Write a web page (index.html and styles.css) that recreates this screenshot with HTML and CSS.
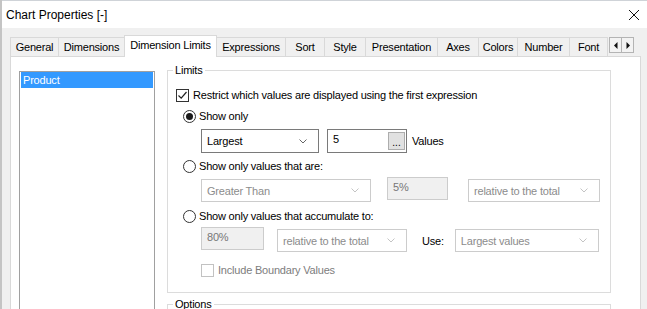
FILE: index.html
```html
<!DOCTYPE html>
<html lang="en">
<head>
    <meta charset="UTF-8">
    <title>Chart Properties [-]</title>
    <link rel="stylesheet" href="styles.css">
</head>
<body>
    <div class="window">
        <div class="titlebar">
            <span class="title">Chart Properties [-]</span>
            <svg class="close" width="12" height="12" viewBox="0 0 12 12"><path d="M1 1L11 11M11 1L1 11" stroke="#111" stroke-width="1" fill="none"/></svg>
        </div>

        <div class="dialog">
            <!-- tab strip -->
            <div class="tabs">
                <div class="tab tab-general">General</div>
                <div class="tab tab-dims">Dimensions</div>
                <div class="tab tab-limits active">Dimension Limits</div>
                <div class="tab tab-expr">Expressions</div>
                <div class="tab tab-sort">Sort</div>
                <div class="tab tab-style">Style</div>
                <div class="tab tab-pres">Presentation</div>
                <div class="tab tab-axes">Axes</div>
                <div class="tab tab-colors">Colors</div>
                <div class="tab tab-number">Number</div>
                <div class="tab tab-font">Font</div>
                <div class="tab-scroll">
                    <span class="scroll-btn"><svg width="4" height="7" viewBox="0 0 4 7"><polygon points="3.5,0 3.5,7 0,3.5" fill="#111"/></svg></span>
                    <span class="scroll-btn"><svg width="4" height="7" viewBox="0 0 4 7"><polygon points="0.5,0 0.5,7 4,3.5" fill="#111"/></svg></span>
                </div>
            </div>

            <div class="panel">
                <div class="listbox">
                    <div class="list-item selected">Product</div>
                </div>

                <div class="settings">
                    <fieldset class="group">
                        <legend>Limits</legend>

                        <div class="check-row">
                            <span class="checkbox"><svg width="11" height="11" viewBox="0 0 11 11"><path d="M1.5 5.5L4.2 8.2L9.5 2" fill="none" stroke="#222" stroke-width="1.2"/></svg></span>
                            Restrict which values are displayed using the first expression
                        </div>

                        <div class="radio-row first">
                            <span class="radio on"></span>Show only
                        </div>
                        <div class="field-row row-one">
                            <div class="combo w-largest">Largest
                                <svg width="8" height="5" viewBox="0 0 8 5"><path d="M0.5 0.5L4 4L7.5 0.5" fill="none" stroke="#666" stroke-width="1"/></svg>
                            </div>
                            <div class="textbox w-count">5<span class="dots">...</span></div>
                            <span class="field-label">Values</span>
                        </div>

                        <div class="radio-row">
                            <span class="radio"></span>Show only values that are:
                        </div>
                        <div class="field-row row-two">
                            <div class="combo disabled w-compare">Greater Than
                                <svg width="8" height="5" viewBox="0 0 8 5"><path d="M0.5 0.5L4 4L7.5 0.5" fill="none" stroke="#c4c4c4" stroke-width="1"/></svg>
                            </div>
                            <div class="textbox disabled w-percent">5%</div>
                            <div class="combo disabled w-relative">relative to the total
                                <svg width="8" height="5" viewBox="0 0 8 5"><path d="M0.5 0.5L4 4L7.5 0.5" fill="none" stroke="#c4c4c4" stroke-width="1"/></svg>
                            </div>
                        </div>

                        <div class="radio-row">
                            <span class="radio"></span>Show only values that accumulate to:
                        </div>
                        <div class="field-row row-three">
                            <div class="textbox disabled w-accum">80%</div>
                            <div class="combo disabled w-relative2">relative to the total
                                <svg width="8" height="5" viewBox="0 0 8 5"><path d="M0.5 0.5L4 4L7.5 0.5" fill="none" stroke="#c4c4c4" stroke-width="1"/></svg>
                            </div>
                            <span class="field-label use">Use:</span>
                            <div class="combo disabled w-use">Largest values
                                <svg width="8" height="5" viewBox="0 0 8 5"><path d="M0.5 0.5L4 4L7.5 0.5" fill="none" stroke="#c4c4c4" stroke-width="1"/></svg>
                            </div>
                        </div>

                        <div class="check-row boundary">
                            <span class="checkbox disabled"></span>Include Boundary Values
                        </div>
                    </fieldset>

                    <fieldset class="group options">
                        <legend>Options</legend>
                    </fieldset>
                </div>
            </div>
        </div>
    </div>
</body>
</html>
```

FILE: styles.css
```css
body {
    margin: 0;
    font-family: "Liberation Sans", Arial, sans-serif;
    font-size: 11px;
    letter-spacing: -0.2px;
    color: #000;
    background-color: #f0f0f0;
}

.window {
    width: 647px;
    height: 309px;
    overflow: hidden;
    box-sizing: border-box;
    border-left: 2px solid #c4c4c4;
    display: flex;
    flex-direction: column;
}

.titlebar {
    flex-shrink: 0;
    height: 28px;
    box-sizing: border-box;
    border-top: 1px solid #cfd3d8;
    background-color: #fff;
    display: flex;
    align-items: center;
    justify-content: space-between;
    padding: 0 7px 0 4px;
}

    .titlebar .title {
        font-size: 12px;
        letter-spacing: 0;
    }

.dialog {
    flex-shrink: 0;
    display: flex;
    flex-direction: column;
    padding: 7px 6px 0 8px;
}

/* tab strip */
.tabs {
    display: flex;
    align-items: flex-end;
    height: 21px;
}

.tab {
    flex-shrink: 0;
    box-sizing: border-box;
    height: 19px;
    line-height: 18px;
    text-align: center;
    border: 1px solid #d9d9d9;
    border-bottom: none;
    margin-left: -1px;
    background-color: #f0f0f0;
}

    .tab:first-child {
        margin-left: 0;
    }

    .tab.active {
        position: relative;
        z-index: 1;
        height: 22px;
        line-height: 19px;
        margin-bottom: -1px;
        background-color: #fff;
    }

.tab-general { width: 49px; }
.tab-dims { width: 67px; }
.tab-limits { width: 93px; }
.tab-expr { width: 70px; }
.tab-sort { width: 40px; }
.tab-style { width: 42px; }
.tab-pres { width: 73px; }
.tab-axes { width: 42px; }
.tab-colors { width: 40px; }
.tab-number { width: 53px; }
.tab-font { width: 39px; }

.tab-scroll {
    display: flex;
    align-self: flex-start;
    margin: 2px 7px 0 auto;
}

.scroll-btn {
    width: 11px;
    height: 14px;
    border: 1px solid #b4b4b4;
    background-color: #f3f3f3;
    display: flex;
    align-items: center;
    justify-content: center;
}

    .scroll-btn + .scroll-btn {
        margin-left: -1px;
    }

/* page body */
.panel {
    display: flex;
    height: 260px;
    background-color: #fff;
    border: 1px solid #d9d9d9;
    padding: 6px 0 0 8px;
}

.listbox {
    flex-shrink: 0;
    width: 136px;
    height: 260px;
    margin-top: 8px;
    box-sizing: border-box;
    border: 1px solid #a0a0a0;
    padding: 0 1px;
}

.list-item {
    height: 16px;
    line-height: 16px;
    padding-left: 2px;
}

    .list-item.selected {
        background-color: #3399ff;
        color: #fff;
    }

.settings {
    width: 444px;
    margin-left: 12px;
}

.group {
    margin: 0;
    min-width: 0;
    padding: 0 8px 15px;
    border: 1px solid #dcdcdc;
}

    .group legend {
        padding: 0 2px;
        margin-left: -3px;
        line-height: 14px;
    }

.options {
    margin-top: 4px;
    height: 40px;
}

.check-row,
.radio-row {
    display: flex;
    align-items: center;
    height: 14px;
}

.check-row {
    margin-top: 11px;
}

    .check-row.boundary {
        margin-left: 25px;
        color: #7d7d7d;
    }

.checkbox {
    width: 13px;
    height: 13px;
    box-sizing: border-box;
    border: 1px solid #333;
    margin-right: 4px;
    display: flex;
    align-items: center;
    justify-content: center;
    background-color: #fff;
}

    .checkbox.disabled {
        border-color: #c2c2c2;
    }

.radio-row {
    margin: 6px 0 0 7px;
}

    .radio-row.first {
        margin-top: 7px;
    }

    .radio-row + .field-row {
        margin-top: 4px;
    }

.radio {
    width: 13px;
    height: 13px;
    box-sizing: border-box;
    border: 1px solid #333;
    border-radius: 50%;
    margin-right: 3px;
    display: flex;
    align-items: center;
    justify-content: center;
}

    .radio.on::after {
        content: "";
        width: 7px;
        height: 7px;
        border-radius: 50%;
        background-color: #1a1a1a;
    }

.field-row {
    display: flex;
    align-items: flex-start;
    margin-left: 25px;
}

    .field-row.row-one {
        margin-top: 6px;
    }

    .field-row + .radio-row {
        margin-top: 6px;
    }

    .row-two + .radio-row {
        margin-top: 7px;
    }

.combo {
    height: 24px;
    box-sizing: border-box;
    border: 1px solid #7a7a7a;
    background-color: #fff;
    display: flex;
    align-items: center;
    justify-content: space-between;
    padding: 0 11px 0 5px;
}

    .combo.disabled {
        height: 23px;
        margin-top: 2px;
        border-color: #cccccc;
        color: #8c8c8c;
    }

.textbox {
    height: 24px;
    box-sizing: border-box;
    border: 1px solid #7a7a7a;
    background-color: #fff;
    display: flex;
    align-items: flex-start;
    padding: 2px 0 0 5px;
    line-height: 14px;
}

    .textbox.disabled {
        height: 23px;
        border-color: #cccccc;
        background-color: #f0f0f0;
        color: #777;
    }

.dots {
    margin: -2px 1px 0 auto;
    align-self: center;
    width: 17px;
    height: 18px;
    box-sizing: border-box;
    border: 1px solid #adadad;
    background-color: #e1e1e1;
    text-align: center;
    line-height: 20px;
    font-size: 10px;
    letter-spacing: 0;
}

.field-label {
    align-self: center;
    margin-left: 5px;
}

    .field-label.use {
        margin: 2px 11px 0 15px;
    }

.w-largest { width: 118px; }
.w-count { width: 80px; margin-left: 8px; }
.w-compare { width: 170px; }
.w-percent { width: 61px; height: 22px; margin-left: 16px; }
.w-relative { width: 132px; margin-left: 20px; }
.w-accum { width: 63px; }
.w-relative2 { width: 130px; height: 24px; margin-left: 13px; }
.w-use { width: 144px; height: 24px; }
```
